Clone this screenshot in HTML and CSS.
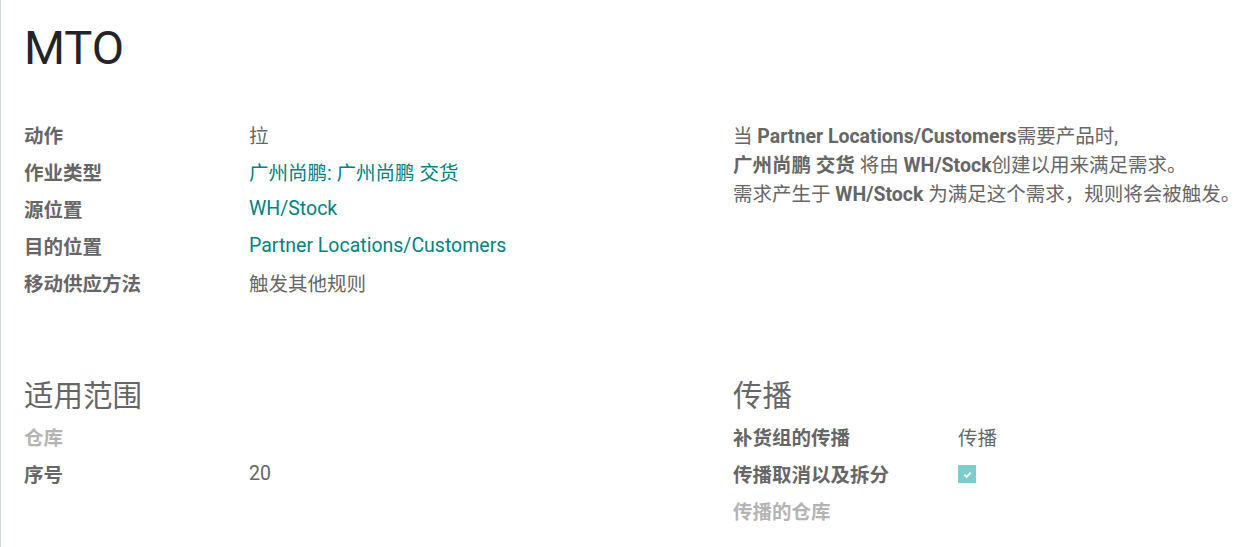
FILE: index.html
```html
<!DOCTYPE html>
<html lang="zh">
<head>
<meta charset="utf-8">
<title>MTO</title>
<link rel="stylesheet" href="styles.css">
</head>
<body>
<div class="sheet">
  <h1 class="title">MTO</h1>
  <div class="group">
    <div class="col">
      <div class="row"><span class="label">动作</span><span class="value">拉</span></div>
      <div class="row"><span class="label">作业类型</span><span class="value link">广州尚鹏: 广州尚鹏 交货</span></div>
      <div class="row"><span class="label">源位置</span><span class="value link">WH/Stock</span></div>
      <div class="row"><span class="label">目的位置</span><span class="value link">Partner Locations/Customers</span></div>
      <div class="row"><span class="label">移动供应方法</span><span class="value">触发其他规则</span></div>
    </div>
    <div class="col desc">
      <p>当 <b>Partner Locations/Customers</b>需要产品时,</p>
      <p><b>广州尚鹏 交货</b> 将由 <b>WH/Stock</b>创建以用来满足需求。</p>
      <p>需求产生于 <b>WH/Stock</b> 为满足这个需求，规则将会被触发。</p>
    </div>
  </div>
  <div class="group second">
    <div class="col">
      <h2 class="heading">适用范围</h2>
      <div class="row"><span class="label muted">仓库</span><span class="value"></span></div>
      <div class="row"><span class="label">序号</span><span class="value">20</span></div>
    </div>
    <div class="col">
      <h2 class="heading">传播</h2>
      <div class="row"><span class="label">补货组的传播</span><span class="value">传播</span></div>
      <div class="row"><span class="label">传播取消以及拆分</span><span class="value"><span class="check"><svg viewBox="0 0 10 10" width="11" height="11"><path d="M2.2 5.2 L4.2 7.1 L7.9 3.2" fill="none" stroke="#fff" stroke-width="1.7"/></svg></span></span></div>
      <div class="row"><span class="label muted">传播的仓库</span><span class="value"></span></div>
    </div>
  </div>
</div>
</body>
</html>
```

FILE: styles.css
```css
html, body {
  margin: 0;
  padding: 0;
  background: #fff;
}
body {
  font-family: Roboto, "Noto Sans CJK SC", sans-serif;
  font-size: 19.5px;
  color: #666;
}
.sheet {
  border-left: 1px solid #ccd5e0;
  min-height: 547px;
  box-sizing: border-box;
  padding: 0 23px;
}
.title {
  margin: 0;
  padding-top: 19px;
  font-size: 47px;
  font-weight: 400;
  line-height: 58px;
  color: #212529;
}
.group {
  display: grid;
  grid-template-columns: 685px 1fr;
  column-gap: 24px;
  margin-top: 39px;
}
.group.second {
  margin-top: 77px;
}
.row {
  display: flex;
  height: 37px;
  align-items: center;
}
.label {
  width: 225px;
  flex: none;
  font-weight: 700;
  color: #666;
}
.label.muted {
  color: #b4b4b4;
}
.value {
  color: #666;
}
.link {
  color: #00827f;
}
.desc {
  padding-top: 6px;
  white-space: nowrap;
}
.desc p {
  margin: 0;
  line-height: 29px;
}
.desc b {
  font-weight: 700;
}
.heading {
  margin: 0 0 4px;
  font-size: 29.5px;
  font-weight: 400;
  line-height: 36px;
  color: #666;
}
.check {
  display: flex;
  width: 18px;
  height: 18px;
  background: #7dcdcd;
  align-items: center;
  justify-content: center;
  margin-top: 1px;
}
```
